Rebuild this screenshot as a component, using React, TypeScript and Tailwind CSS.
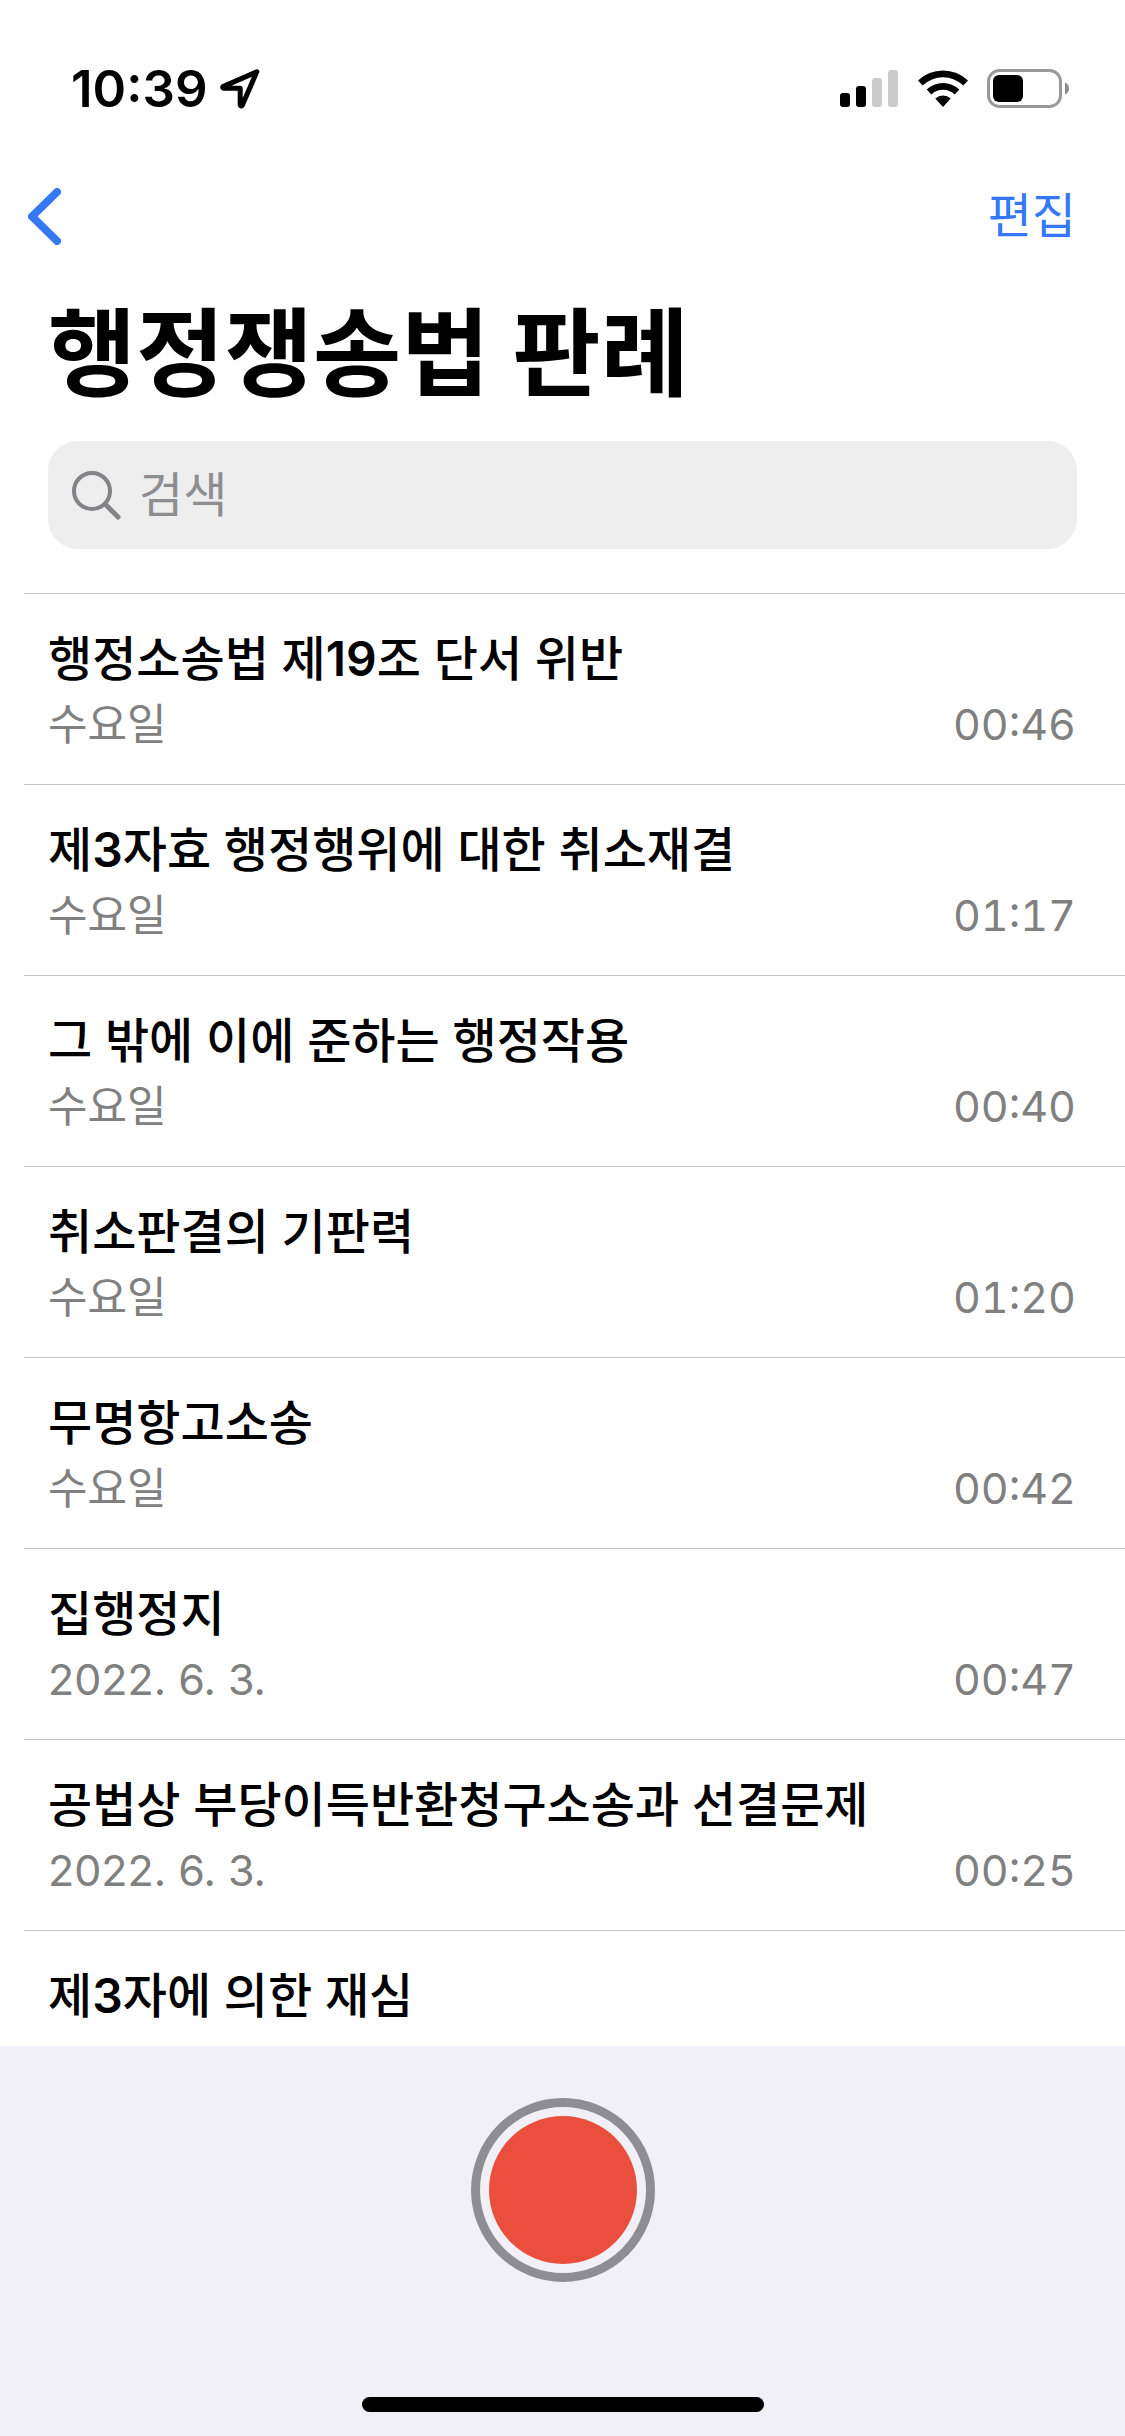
import { useState } from "react";

type Recording = { title: string; date: string; duration: string };

const recordings: Recording[] = [
  { title: "행정소송법 제19조 단서 위반", date: "수요일", duration: "00:46" },
  { title: "제3자효 행정행위에 대한 취소재결", date: "수요일", duration: "01:17" },
  { title: "그 밖에 이에 준하는 행정작용", date: "수요일", duration: "00:40" },
  { title: "취소판결의 기판력", date: "수요일", duration: "01:20" },
  { title: "무명항고소송", date: "수요일", duration: "00:42" },
  { title: "집행정지", date: "2022. 6. 3.", duration: "00:47" },
  { title: "공법상 부당이득반환청구소송과 선결문제", date: "2022. 6. 3.", duration: "00:25" },
  { title: "제3자에 의한 재심", date: "2022. 6. 3.", duration: "00:51" },
];

function StatusBar() {
  return (
    <div className="flex h-[178px] items-center justify-between pr-14 pl-[71px]">
      <div className="flex items-center gap-3">
        <span className="pb-0.5 text-[51px] leading-none font-semibold">10:39</span>
        <svg width="40" height="40" viewBox="0 0 40 40" fill="none" stroke="#000" strokeWidth="5" strokeLinejoin="round" aria-hidden="true">
          <path d="M36.8 2.8 3 17.6Q2.2 18.9 3.6 19.2H20.2V36Q20.8 37.8 22.2 36.4Z" />
        </svg>
      </div>
      <div className="flex items-center">
        <svg width="58" height="38" viewBox="0 0 58 38" aria-hidden="true">
          <rect x="0" y="23" width="10" height="14" rx="3" />
          <rect x="16" y="16" width="10" height="21" rx="3" />
          <rect x="32" y="8" width="10" height="29" rx="3" fill="#cbcbcb" />
          <rect x="48" y="0" width="10" height="37" rx="3" fill="#cbcbcb" />
        </svg>
        <svg className="ml-5" width="50" height="38" viewBox="0 0 50 38" aria-hidden="true">
          <path d="M0 10.6a36 36 0 0 1 50 0l-4.6 4.9a29.5 29.5 0 0 0-40.8 0Z" />
          <path d="M8.7 19.6a23.6 23.6 0 0 1 32.6 0l-4.7 4.8a16.8 16.8 0 0 0-23.2 0Z" />
          <path d="M17.3 28.4a11.4 11.4 0 0 1 15.4 0L25 37Z" />
        </svg>
        <svg className="ml-[19px]" width="82" height="40" viewBox="0 0 82 40" aria-hidden="true">
          <rect x="1.5" y="1.5" width="72" height="36" rx="11" fill="none" stroke="#999" strokeWidth="3" />
          <rect x="6" y="6" width="30" height="27" rx="6" />
          <path d="M78 13.5q4 1.8 4 6t-4 6Z" fill="#8c8c8c" />
        </svg>
      </div>
    </div>
  );
}

function RecordingRow({ title, date, duration }: Recording) {
  return (
    <li className="ml-6 border-t border-[#c6c6c8] pt-8 pr-[49px] pb-[27px] pl-6">
      <h2 className="text-[48px] leading-[65px] font-medium">
        {title.split(/(\d+)/).map((part, i) =>
          i % 2 ? (
            <span key={i} className="font-semibold">{part}</span>
          ) : (
            part
          ),
        )}
      </h2>
      <div className="mt-px flex items-center justify-between text-[43px] leading-[65px] text-[#808080]">
        <span>{date}</span>
        <time className="tabular-nums">{duration}</time>
      </div>
    </li>
  );
}

export default function App() {
  const [query, setQuery] = useState("");
  return (
    <div className="flex h-screen flex-col overflow-hidden bg-white font-['Inter','Noto_Sans_CJK_KR',sans-serif] text-black">
      <StatusBar />
      <nav className="flex h-[76px] items-center justify-between pr-[49px] pl-7 text-[#3478f6]">
        <button type="button" aria-label="뒤로">
          <svg width="33" height="57" viewBox="0 0 33 57" fill="none" stroke="currentColor" strokeWidth="8" strokeLinecap="round" strokeLinejoin="round" aria-hidden="true">
            <path d="M29 4 4 28.5 29 53" />
          </svg>
        </button>
        <button type="button" className="text-[48px] leading-none">편집</button>
      </nav>
      <h1 className="mt-[33px] px-12 text-[96px] leading-[132px] font-bold">행정쟁송법 판례</h1>
      <label className="mx-12 mt-[22px] mb-11 flex h-[108px] shrink-0 items-center gap-[18px] rounded-[30px] bg-[#eeeeef] px-6">
        <svg width="49" height="49" viewBox="0 0 49 49" fill="none" stroke="#848488" strokeLinecap="round" aria-hidden="true">
          <circle cx="20" cy="20" r="18" strokeWidth="4" />
          <path d="M33 33 46 46" strokeWidth="5" />
        </svg>
        <input
          type="text"
          aria-label="검색"
          placeholder="검색"
          value={query}
          onChange={(e) => setQuery(e.target.value)}
          className="min-w-0 flex-1 bg-transparent text-[48px] outline-none placeholder:text-[#8e8e92]"
        />
      </label>
      <ul className="min-h-0 flex-1 overflow-hidden">
        {recordings.map((r) => (
          <RecordingRow key={r.title} {...r} />
        ))}
      </ul>
      <footer className="flex shrink-0 flex-col items-center bg-[#f1f0f6] pt-[52px] pb-6">
        <button type="button" aria-label="녹음" className="size-[184px] rounded-full border-[9px] border-[#8e8d93] p-[9px]">
          <span className="block size-full rounded-full bg-[#ea4e3d]" />
        </button>
        <div className="mt-[115px] h-[15px] w-[402px] rounded-full bg-black" />
      </footer>
    </div>
  );
}
